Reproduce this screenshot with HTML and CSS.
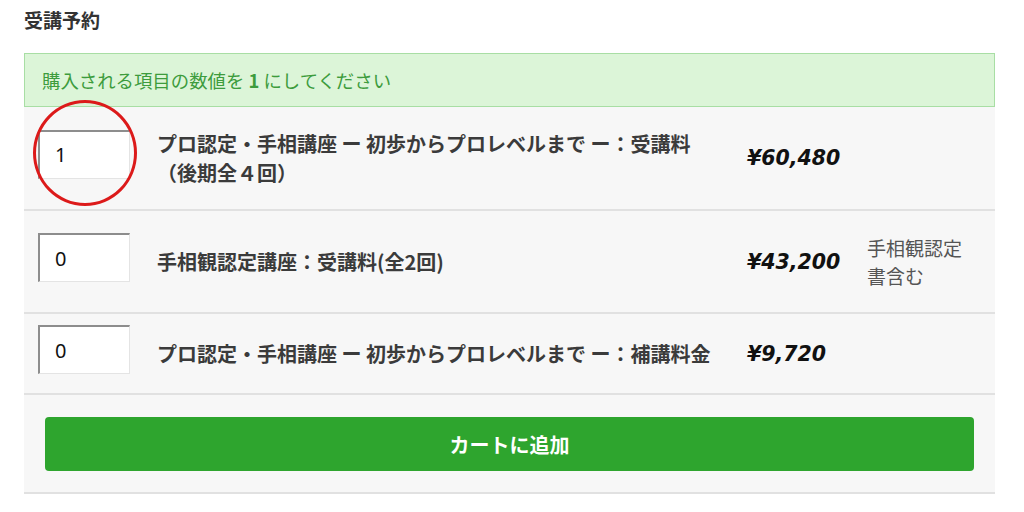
FILE: index.html
```html
<!DOCTYPE html>
<html lang="ja">
  <head>
    <meta charset="UTF-8" />
    <meta name="viewport" content="width=device-width, initial-scale=1.0" />
    <title>受講予約</title>
    <link rel="stylesheet" href="styles.css">
  </head>
  <body>
    <div class="booking">
      <h2 class="title">受講予約</h2>

      <div class="notice">購入される項目の数値を <strong>1</strong> にしてください</div>

      <div class="items">
        <div class="item">
          <div class="qty">
            <input type="text" value="1" />
            <span class="mark"></span>
          </div>
          <div class="name">プロ認定・手相講座 ー 初歩からプロレベルまで ー：受講料（後期全４回）</div>
          <div class="price">¥60,480</div>
          <div class="note"></div>
        </div>

        <div class="item">
          <div class="qty"><input type="text" value="0" /></div>
          <div class="name">手相観認定講座：受講料(全2回)</div>
          <div class="price">¥43,200</div>
          <div class="note">手相観認定書含む</div>
        </div>

        <div class="item short">
          <div class="qty"><input type="text" value="0" /></div>
          <div class="name">プロ認定・手相講座 ー 初歩からプロレベルまで ー：補講料金</div>
          <div class="price">¥9,720</div>
          <div class="note"></div>
        </div>

        <div class="actions">
          <button>カートに追加</button>
        </div>
      </div>
    </div>
  </body>
</html>
```

FILE: styles.css
```css
* {
  margin: 0;
  padding: 0;
  box-sizing: border-box;
}
body {
  font-family: "Noto Sans CJK JP", sans-serif;
  background-color: #fff;
  color: #333;
}

.booking {
  padding: 0 29px 0 24px;
}

.title {
  padding-top: 7px;
  margin-bottom: 21px;
  font-size: 19px;
  line-height: 25px;
  font-weight: bold;
  color: #333;
}

.notice {
  height: 54px;
  padding: 0 17px;
  line-height: 52px;
  font-size: 18.4px;
  color: #3d9c3d;
  background-color: #dcf5d8;
  border: 1px solid #a8dea4;
}

.notice strong {
  font-weight: bold;
}

.items {
  background-color: #f7f7f7;
}

.item {
  display: grid;
  grid-template-columns: 92px 563px 93px 1fr;
  column-gap: 27px;
  align-items: center;
  padding: 22px 0 22px 14px;
  border-bottom: 2px solid #e1e1e1;
}

.item.short {
  padding-top: 11px;
  padding-bottom: 11px;
}

.qty {
  position: relative;
}

.qty input {
  display: block;
  width: 92px;
  height: 49px;
  margin-bottom: 8px;
  padding-left: 15px;
  font-family: "Noto Sans", sans-serif;
  font-size: 20px;
  color: #111;
  background-color: #fff;
  border-style: solid;
  border-width: 2px 1px 1px 2px;
  border-color: #8d8d8d #e4e4e4 #e4e4e4 #8d8d8d;
  outline: none;
}

.mark {
  position: absolute;
  left: -5px;
  top: -30px;
  width: 104px;
  height: 106px;
  border: 3px solid #dc1a1a;
  border-radius: 50%;
  pointer-events: none;
}

.name {
  font-size: 20px;
  line-height: 29px;
  font-weight: bold;
  color: #3b3b3b;
}

.price {
  font-family: "DejaVu Sans", sans-serif;
  font-size: 20.5px;
  font-weight: bold;
  font-style: italic;
  color: #111;
  white-space: nowrap;
}

.note {
  width: 104px;
  font-size: 19px;
  line-height: 28px;
  color: #555;
}

.actions {
  padding: 22px 21px 21px;
  border-bottom: 2px solid #e1e1e1;
}

.actions button {
  display: block;
  width: 100%;
  height: 54px;
  font-family: "Noto Sans CJK JP", sans-serif;
  font-size: 20px;
  font-weight: bold;
  color: #fff;
  background-color: #2ea52e;
  border: none;
  border-radius: 4px;
  cursor: pointer;
}

.actions button:hover {
  background-color: #278f27;
}
```
